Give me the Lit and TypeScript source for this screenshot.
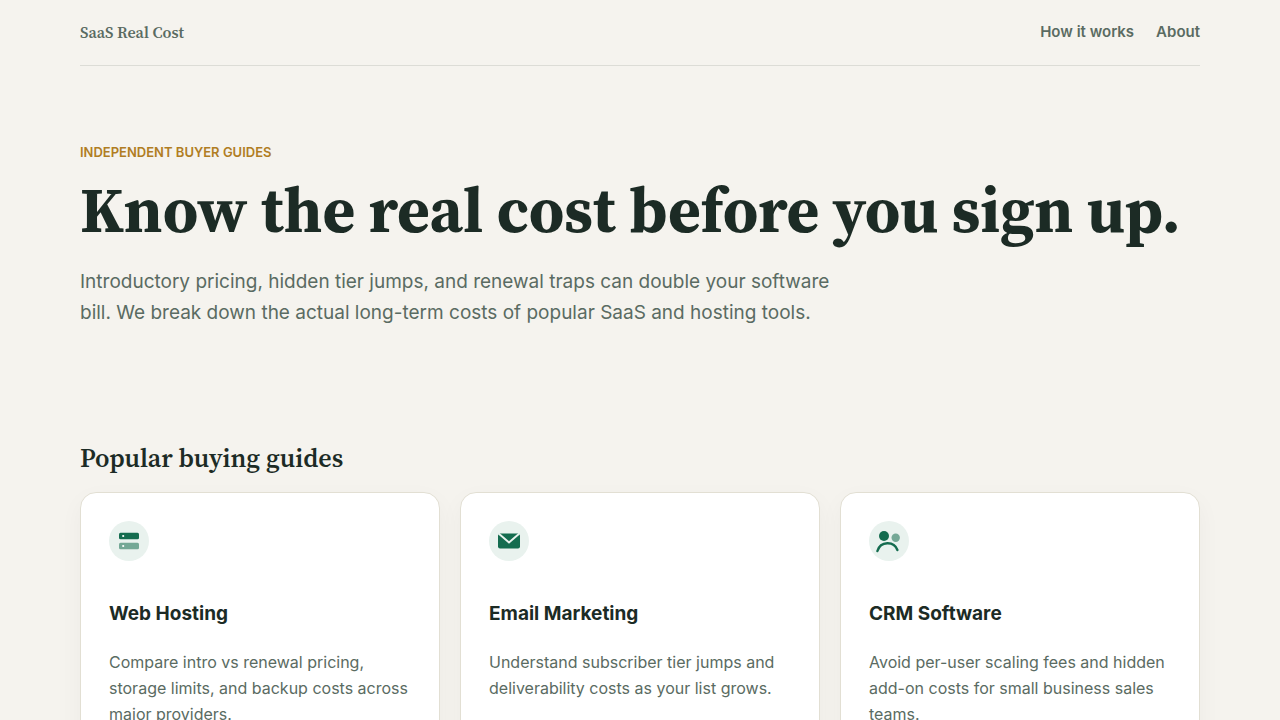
import { LitElement, html, css, svg, type SVGTemplateResult } from "lit";
import { customElement } from "lit/decorators.js";

interface Guide {
  title: string;
  text: string;
  href: string;
  icon: SVGTemplateResult;
}

const hosting = svg`
  <rect x="2" y="3.75" width="20" height="6.5" rx="1.5" fill="#146c4f" />
  <circle cx="6.2" cy="7" r="1.1" fill="#fff" />
  <rect x="2" y="13.75" width="20" height="6.5" rx="1.5" fill="#146c4f" opacity="0.55" />
  <circle cx="6.2" cy="17" r="1.1" fill="#fff" />`;

const email = svg`
  <rect x="1" y="4.5" width="22" height="15" rx="2" fill="#146c4f" />
  <path d="M1.6 4.6 L12 13.4 L22.4 4.6" fill="none" stroke="#e9f2ee" stroke-width="2" />`;

const crm = svg`
  <circle cx="7" cy="7" r="5" fill="#146c4f" />
  <circle cx="18.7" cy="8.7" r="4.2" fill="#146c4f" opacity="0.55" />
  <path d="M0.4 22 C3.5 11.8 17 11.8 20.4 21" fill="none" stroke="#146c4f" stroke-width="2.4" stroke-linecap="round" />`;

const guides: Guide[] = [
  {
    title: "Web Hosting",
    text: "Compare intro vs renewal pricing, storage limits, and backup costs across major providers.",
    href: "#web-hosting",
    icon: hosting,
  },
  {
    title: "Email Marketing",
    text: "Understand subscriber tier jumps and deliverability costs as your list grows.",
    href: "#email-marketing",
    icon: email,
  },
  {
    title: "CRM Software",
    text: "Avoid per-user scaling fees and hidden add-on costs for small business sales teams.",
    href: "#crm-software",
    icon: crm,
  },
];

@customElement("app-root")
export class AppRoot extends LitElement {
  static styles = css`
    :host {
      display: block;
      min-height: 100vh;
      background: #f5f3ee;
      color: #1c2b25;
      font-family: Inter, sans-serif;
    }
    .page {
      max-width: 1120px;
      margin: 0 auto;
      padding: 0 24px;
    }
    a {
      color: inherit;
      text-decoration: none;
    }
    .header {
      display: flex;
      justify-content: space-between;
      align-items: center;
      padding: 20px 0 21px;
      border-bottom: 1px solid #dcdcd6;
      color: #5a6b62;
      line-height: 24px;
    }
    .brand,
    .title,
    .section-title {
      font-family: "Source Serif 4", "Liberation Serif", serif;
    }
    .brand {
      font-size: 16px;
      font-weight: 600;
    }
    .nav {
      display: flex;
      gap: 22px;
      font-size: 15px;
      font-weight: 600;
    }
    .hero {
      padding: 76px 0 112px;
    }
    .eyebrow {
      margin: 0 0 14px;
      color: #b07d23;
      font-size: 13px;
      line-height: 21px;
      font-weight: 600;
      text-transform: uppercase;
    }
    .title {
      margin: 0 0 22px;
      font-size: 63px;
      line-height: 67px;
      font-weight: 700;
    }
    .lead {
      max-width: 760px;
      margin: 0;
      color: #5a6b62;
      font-size: 19px;
      line-height: 31px;
    }
    .section-title {
      margin: 0 0 16px;
      font-size: 26px;
      line-height: 36px;
      font-weight: 600;
    }
    .grid {
      display: grid;
      grid-template-columns: repeat(auto-fit, minmax(280px, 1fr));
      gap: 20px;
      padding-bottom: 80px;
    }
    .card {
      padding: 28px;
      border: 1px solid #e2dfd3;
      border-radius: 16px;
      background: #fff;
      box-shadow: 0 8px 24px rgba(28, 43, 37, 0.04);
    }
    .badge {
      display: flex;
      align-items: center;
      justify-content: center;
      width: 40px;
      height: 40px;
      margin-bottom: 36px;
      border-radius: 50%;
      background: #e9f2ee;
    }
    .icon {
      width: 24px;
      height: 24px;
      overflow: visible;
    }
    .card-title {
      margin: 0 0 19px;
      font-size: 19px;
      line-height: 33px;
      font-weight: 700;
    }
    .card-text {
      margin: 0;
      color: #5a6b62;
      font-size: 16px;
      line-height: 26px;
    }
  `;

  render() {
    return html`
      <div class="page">
        <header class="header">
          <a class="brand" href="#home">SaaS Real Cost</a>
          <nav class="nav">
            <a href="#how-it-works">How it works</a>
            <a href="#about">About</a>
          </nav>
        </header>
        <main>
          <section class="hero">
            <p class="eyebrow">Independent buyer guides</p>
            <h1 class="title">Know the real cost before you sign up.</h1>
            <p class="lead">
              Introductory pricing, hidden tier jumps, and renewal traps can double your software
              bill. We break down the actual long-term costs of popular SaaS and hosting tools.
            </p>
          </section>
          <section>
            <h2 class="section-title">Popular buying guides</h2>
            <div class="grid">
              ${guides.map(
                (guide) => html`
                  <a class="card" href=${guide.href}>
                    <span class="badge">
                      <svg class="icon" viewBox="0 0 24 24" aria-hidden="true">${guide.icon}</svg>
                    </span>
                    <h3 class="card-title">${guide.title}</h3>
                    <p class="card-text">${guide.text}</p>
                  </a>
                `
              )}
            </div>
          </section>
        </main>
      </div>
    `;
  }
}
